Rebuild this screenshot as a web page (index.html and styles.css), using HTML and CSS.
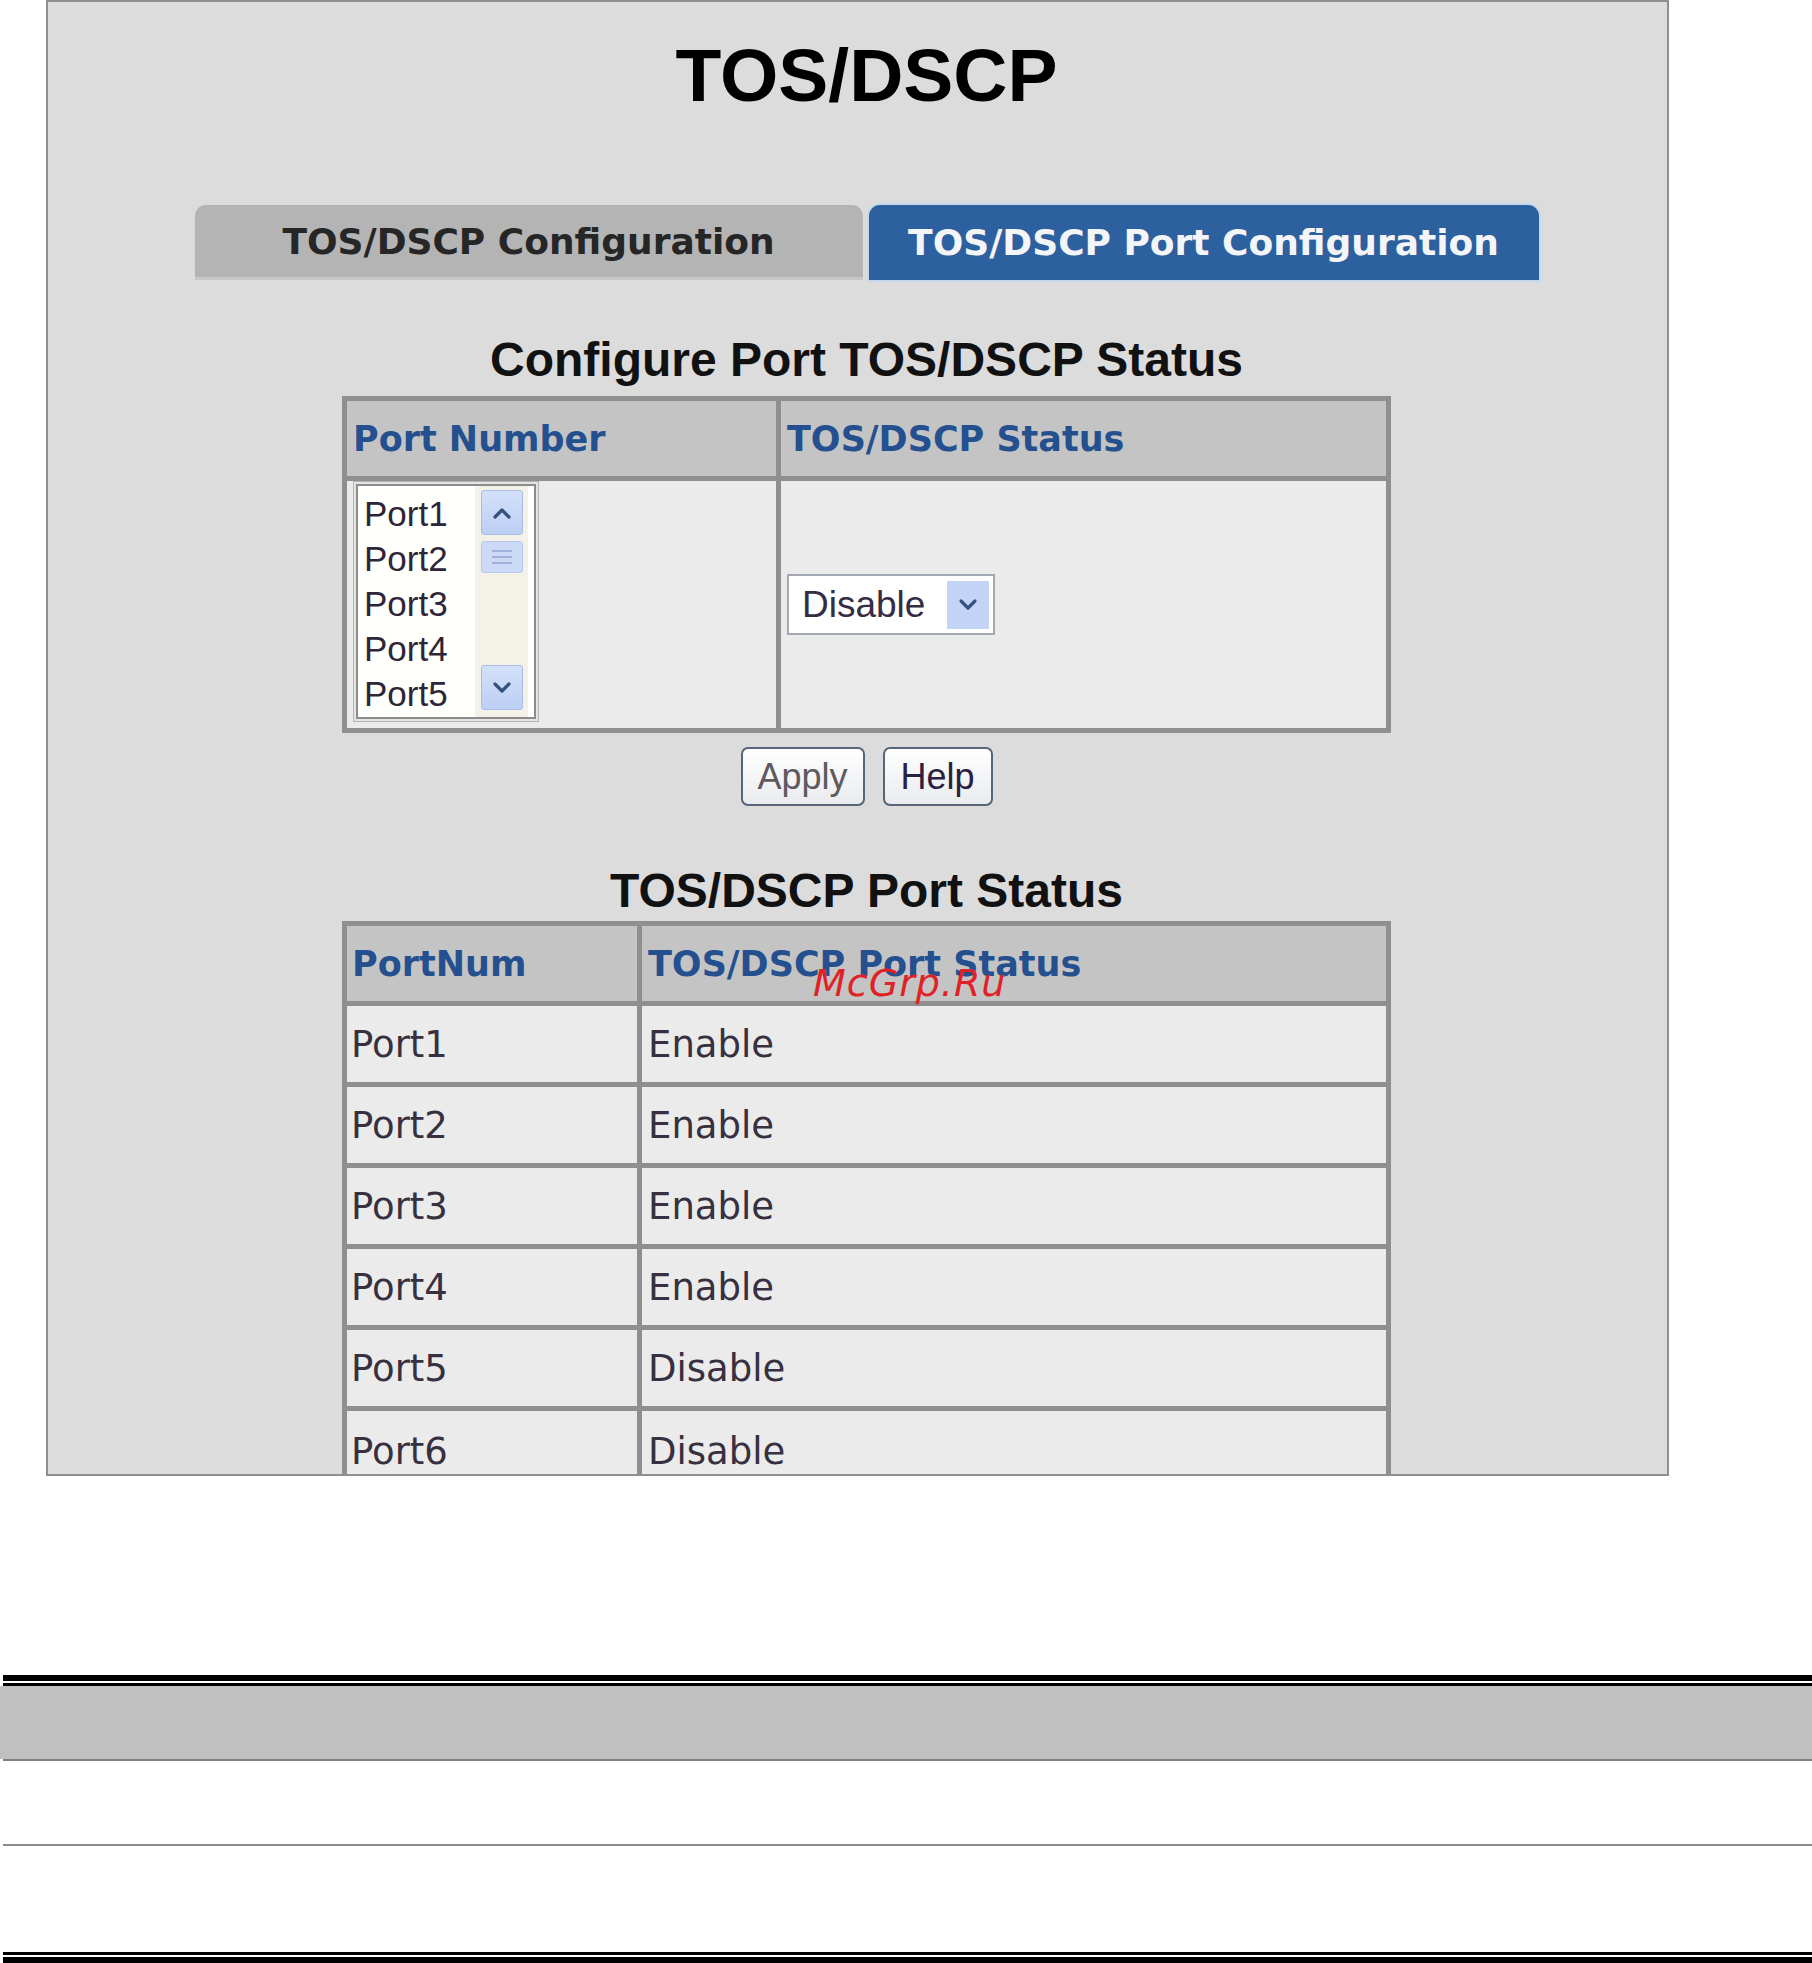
FILE: index.html
```html
<!DOCTYPE html>
<html lang="en">
<head>
<meta charset="utf-8">
<title>TOS/DSCP</title>
<link rel="stylesheet" href="styles.css">
</head>
<body>
<div class="frame">
  <div class="inner">
    <h1 class="title">TOS/DSCP</h1>
    <div class="tabs">
      <div class="tab tab-off">TOS/DSCP Configuration</div>
      <div class="tab tab-on">TOS/DSCP Port Configuration</div>
    </div>

    <h2 class="section">Configure Port TOS/DSCP Status</h2>
    <table class="tbl tbl-config">
      <tr class="head">
        <th class="c1">Port Number</th>
        <th>TOS/DSCP Status</th>
      </tr>
      <tr class="body-row">
        <td class="c1 cell-list">
          <div class="listbox">
            <div class="listbox-inner">
              <div class="items">
                <div class="item">Port1</div>
                <div class="item">Port2</div>
                <div class="item">Port3</div>
                <div class="item">Port4</div>
                <div class="item">Port5</div>
              </div>
              <div class="scrollbar">
                <div class="sb-btn">
                  <svg width="22" height="16" viewBox="0 0 22 16"><polyline points="4,12 11,5 18,12" fill="none" stroke="#34527f" stroke-width="3.2" stroke-linecap="round" stroke-linejoin="round"/></svg>
                </div>
                <div class="sb-thumb">
                  <span class="grip"></span><span class="grip"></span><span class="grip"></span>
                </div>
                <div class="sb-track"></div>
                <div class="sb-btn">
                  <svg width="22" height="16" viewBox="0 0 22 16"><polyline points="4,4 11,11 18,4" fill="none" stroke="#34527f" stroke-width="3.2" stroke-linecap="round" stroke-linejoin="round"/></svg>
                </div>
              </div>
            </div>
          </div>
        </td>
        <td class="cell-select">
          <div class="select">
            <span class="select-text">Disable</span>
            <span class="select-btn">
              <svg width="22" height="16" viewBox="0 0 22 16"><polyline points="4,4 11,11 18,4" fill="none" stroke="#34527f" stroke-width="3.2" stroke-linecap="round" stroke-linejoin="round"/></svg>
            </span>
          </div>
        </td>
      </tr>
    </table>

    <div class="buttons">
      <button class="btn btn-apply">Apply</button>
      <button class="btn btn-help">Help</button>
    </div>

    <h2 class="section section2">TOS/DSCP Port Status</h2>
    <table class="tbl tbl-status">
      <tr class="head">
        <th class="c1">PortNum</th>
        <th>TOS/DSCP Port Status</th>
      </tr>
      <tr class="row"><td class="c1">Port1</td><td>Enable</td></tr>
      <tr class="row"><td class="c1">Port2</td><td>Enable</td></tr>
      <tr class="row"><td class="c1">Port3</td><td>Enable</td></tr>
      <tr class="row"><td class="c1">Port4</td><td>Enable</td></tr>
      <tr class="row"><td class="c1">Port5</td><td>Disable</td></tr>
      <tr class="row last"><td class="c1">Port6</td><td>Disable</td></tr>
    </table>
  </div>
  <div class="watermark">McGrp.Ru</div>
</div>

<div class="doc-head">
  <div class="rule-thick"></div>
  <div class="rule-thin"></div>
  <div class="band"></div>
  <div class="band-line"></div>
</div>
<div class="doc-line"></div>
<div class="doc-foot">
  <div class="rule-thin foot-thin"></div>
  <div class="rule-thick foot-thick"></div>
</div>
</body>
</html>
```

FILE: styles.css
```css
html, body {
  margin: 0;
  padding: 0;
  background: #ffffff;
}

body {
  width: 1812px;
  height: 1963px;
  overflow: hidden;
  font-family: "Liberation Sans", Arial, sans-serif;
}

.frame {
  position: relative;
  margin-left: 46px;
  width: 1623px;
  height: 1476px;
  box-sizing: border-box;
  border: 2px solid #8f8f8f;
  background: #dcdcdc;
  overflow: hidden;
}

.inner {
  padding-left: 18px;
  display: flex;
  flex-direction: column;
  align-items: center;
}

.title {
  margin: 30px 0 0 0;
  font-family: "Liberation Sans", Arial, sans-serif;
  font-weight: bold;
  font-size: 75px;
  line-height: 86px;
  color: #000;
  text-align: center;
}

.tabs {
  margin-top: 87px;
  display: flex;
  gap: 6px;
}

.tab {
  height: 75px;
  display: flex;
  align-items: center;
  justify-content: center;
  border-radius: 11px 11px 0 0;
  font-family: "DejaVu Sans", Verdana, sans-serif;
  font-weight: bold;
  font-size: 36px;
  box-sizing: border-box;
}

.tab-off {
  width: 668px;
  background: #b4b4b4;
  color: #262626;
  border-bottom: 3px solid #c8c8c8;
}

.tab-on {
  width: 670px;
  background: #2d609e;
  color: #f3f5f9;
  box-shadow: 0 0 0 2px #c5d8ee;
}

.section {
  margin: 52px 0 0 0;
  font-family: "Liberation Sans", Arial, sans-serif;
  font-weight: bold;
  font-size: 48px;
  line-height: 56px;
  color: #111;
  text-align: center;
}

.section2 {
  margin-top: 57px;
}

.tbl {
  margin-top: 8px;
  width: 1049px;
  box-sizing: border-box;
  border-collapse: separate;
  border-spacing: 0;
  border: 5px solid #8f8f8f;
  background: #ebebeb;
}

.tbl th,
.tbl td {
  box-sizing: border-box;
  padding: 0 6px;
  border-right: 5px solid #8f8f8f;
  border-bottom: 5px solid #8f8f8f;
  text-align: left;
}

.tbl th:last-child,
.tbl td:last-child {
  border-right: none;
}

.tbl .head th {
  height: 80px;
  background: #c4c4c4;
  font-family: "DejaVu Sans", Verdana, sans-serif;
  font-weight: bold;
  font-size: 35px;
  color: #24508f;
  vertical-align: middle;
}

.tbl-config .c1 {
  width: 434px;
}

.tbl-config .body-row td {
  height: 247px;
  border-bottom: none;
  background: #ebebeb;
}

.cell-list {
  vertical-align: top;
  padding-top: 5px;
}

.cell-select {
  vertical-align: middle;
  padding-left: 4px;
}

.listbox {
  width: 186px;
  height: 241px;
  box-sizing: border-box;
  border: 1px solid #b4b4b4;
  padding: 2px;
  background: #e4e4e4;
}

.listbox-inner {
  height: 100%;
  box-sizing: border-box;
  border: 2px solid #8c8c8c;
  background: #fffffb;
  display: flex;
}

.items {
  width: 117px;
  padding-top: 5px;
}

.item {
  padding-left: 6px;
  font-family: "Liberation Sans", Arial, sans-serif;
  font-size: 35px;
  line-height: 45px;
  color: #2e2638;
}

.scrollbar {
  width: 53px;
  box-sizing: border-box;
  padding: 4px 5px 7px 6px;
  background: #f3f1e8;
  display: flex;
  flex-direction: column;
}

.sb-btn {
  height: 45px;
  box-sizing: border-box;
  border: 1px solid #a9bde6;
  border-radius: 3px;
  background: linear-gradient(#d3e0fa, #bccff4);
  display: flex;
  align-items: center;
  justify-content: center;
}

.sb-thumb {
  margin-top: 6px;
  height: 32px;
  box-sizing: border-box;
  border: 1px solid #b8c9ee;
  border-radius: 3px;
  background: #ccdaf7;
  display: flex;
  flex-direction: column;
  align-items: center;
  justify-content: center;
  gap: 4px;
}

.grip {
  display: block;
  width: 20px;
  height: 2px;
  background: #9fb3dd;
}

.sb-track {
  flex: 1;
}

.select {
  width: 208px;
  height: 61px;
  box-sizing: border-box;
  border: 2px solid #a3a9b2;
  background: #ffffff;
  display: flex;
  align-items: center;
  justify-content: space-between;
  padding: 0 4px 0 13px;
}

.select-text {
  font-family: "Liberation Sans", Arial, sans-serif;
  font-size: 37px;
  color: #352c45;
}

.select-btn {
  width: 42px;
  height: 48px;
  background: #c3d4f6;
  display: flex;
  align-items: center;
  justify-content: center;
}

.buttons {
  margin-top: 14px;
  display: flex;
  gap: 18px;
}

.btn {
  height: 59px;
  box-sizing: border-box;
  border: 2px solid #56657a;
  border-radius: 7px;
  background: linear-gradient(#ffffff, #e9ebee);
  font-family: "Liberation Sans", Arial, sans-serif;
  font-size: 36px;
  padding: 0;
  margin: 0;
}

.btn-apply {
  width: 124px;
  color: #5e5a5e;
}

.btn-help {
  width: 110px;
  color: #2a2040;
}

.tbl-status {
  margin-top: 2px;
}

.tbl-status .c1 {
  width: 295px;
}

.tbl-status .row td {
  height: 81px;
  font-family: "DejaVu Sans", Verdana, sans-serif;
  font-size: 37px;
  color: #363040;
  vertical-align: middle;
  background: #ebebeb;
}

.tbl-status .row td.c1 {
  padding-left: 4px;
}

.tbl-status .head th.c1 {
  padding-left: 5px;
}

.tbl-status .row.last td {
  border-bottom: none;
}

.watermark {
  position: absolute;
  left: 765px;
  top: 962px;
  font-family: "DejaVu Sans", Verdana, sans-serif;
  font-style: italic;
  font-size: 38px;
  line-height: 1;
  letter-spacing: 1px;
  color: #e02226;
}

.doc-head {
  margin-top: 199px;
}

.rule-thick {
  margin-left: 3px;
  height: 6px;
  background: #000;
}

.rule-thin {
  margin-left: 3px;
  margin-top: 2px;
  height: 3px;
  background: #000;
}

.band {
  height: 73px;
  background: #c0c0c0;
}

.band-line {
  margin-left: 3px;
  height: 2px;
  background: #808080;
}

.doc-line {
  margin-top: 83px;
  margin-left: 3px;
  height: 2px;
  background: #8a8a8a;
}

.doc-foot .foot-thin {
  margin-top: 106px;
}

.doc-foot .foot-thick {
  margin-top: 2px;
}
```
